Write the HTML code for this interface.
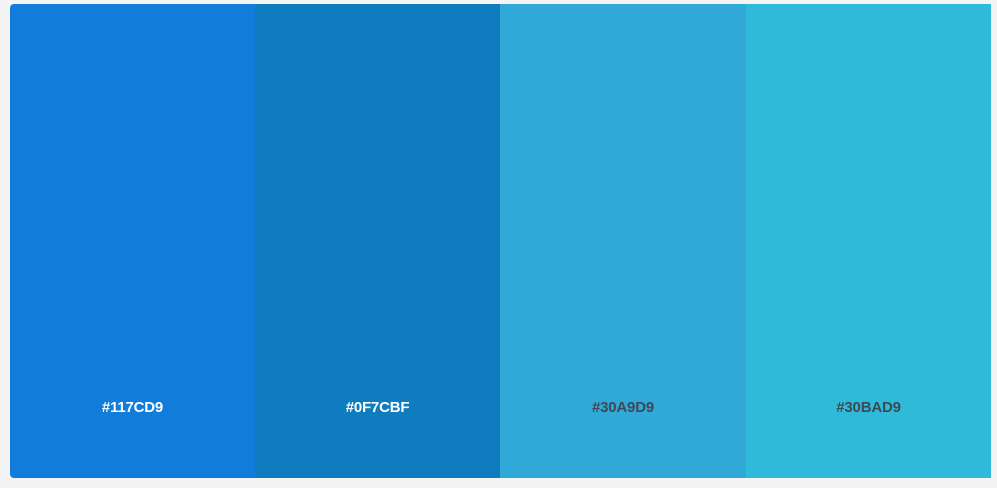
<!DOCTYPE html><html><head><style>
body{margin:0;width:997px;height:488px;background:#f4f4f4;overflow:hidden;font-family:"Liberation Sans",sans-serif}
.p{position:absolute;left:10px;top:4px;width:981px;height:474px;border-radius:4px 0 0 4px;overflow:hidden;display:flex}
.c{flex:0 0 auto;height:100%;position:relative}
.c span{position:absolute;left:0;right:0;top:395px;text-align:center;font-weight:bold;font-size:15px;letter-spacing:-0.2px}
</style></head><body><div class="p">
<div class="c" style="width:245px;background:#117CD9"><span style="color:#fff">#117CD9</span></div>
<div class="c" style="width:245px;background:#0F7CBF"><span style="color:#fff">#0F7CBF</span></div>
<div class="c" style="width:246px;background:#30A9D9"><span style="color:#3c4a55">#30A9D9</span></div>
<div class="c" style="width:245px;background:#30BAD9"><span style="color:#3c4a55">#30BAD9</span></div>
</div></body></html>
